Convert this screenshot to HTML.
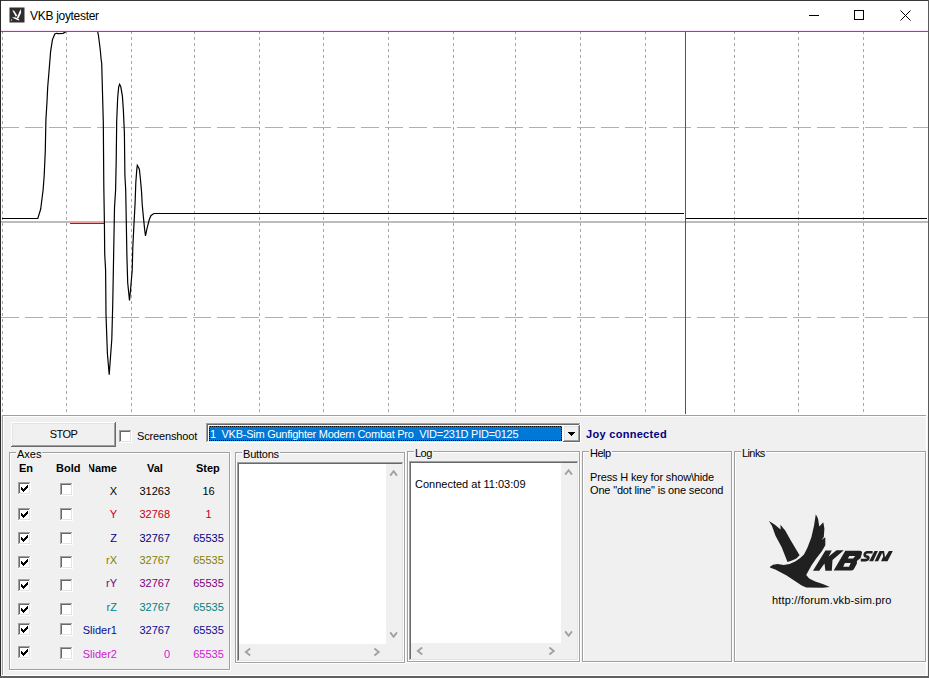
<!DOCTYPE html>
<html><head><meta charset="utf-8">
<style>
html,body{margin:0;padding:0;}
body{width:929px;height:678px;position:relative;overflow:hidden;background:#f0f0f0;font-family:"Liberation Sans",sans-serif;font-size:11px;color:#000;}
.t{position:absolute;white-space:nowrap;line-height:13px;height:13px;}
.r{text-align:right;}
.c{text-align:center;}
.b{font-weight:bold;}
.lbl{background:#f0f0f0;padding:0 1px;}
svg{position:absolute;left:0;top:0;}
</style></head><body>
<svg width="929" height="678" viewBox="0 0 929 678" shape-rendering="crispEdges">
<defs><clipPath id="cc"><rect x="1" y="31" width="927" height="384"/></clipPath></defs>
<rect x="0" y="0" width="929" height="31" fill="#ffffff"/>
<rect x="1" y="31" width="927" height="384" fill="#ffffff"/>
<g stroke="#a8a8a8" stroke-width="1" stroke-dasharray="3 3">
<line x1="2.5" y1="31" x2="2.5" y2="415" />
<line x1="66.5" y1="31" x2="66.5" y2="415" />
<line x1="131.5" y1="31" x2="131.5" y2="415" />
<line x1="194.5" y1="31" x2="194.5" y2="415" />
<line x1="259.5" y1="31" x2="259.5" y2="415" />
<line x1="323.5" y1="31" x2="323.5" y2="415" />
<line x1="388.5" y1="31" x2="388.5" y2="415" />
<line x1="453.5" y1="31" x2="453.5" y2="415" />
<line x1="515.5" y1="31" x2="515.5" y2="415" />
<line x1="580.5" y1="31" x2="580.5" y2="415" />
<line x1="645.5" y1="31" x2="645.5" y2="415" />
<line x1="734.5" y1="31" x2="734.5" y2="415" />
<line x1="798.5" y1="31" x2="798.5" y2="415" />
<line x1="863.5" y1="31" x2="863.5" y2="415" />
</g>
<g stroke="#b0b0b0" stroke-width="1" stroke-dasharray="18 6">
<line x1="1" y1="127.5" x2="928" y2="127.5"/>
<line x1="1" y1="317.5" x2="928" y2="317.5"/>
</g>
<rect x="1" y="221" width="927" height="2" fill="#bcbcbc"/>
<rect x="70" y="222" width="34" height="1" fill="#f4a0a0"/>
<rect x="70" y="223" width="34" height="1" fill="#a81818"/>
<path d="M2,218.5 L37.8,218.5 L40.7,209 L41.9,199.5 L43.1,190 L44.2,175.5 L45.3,150.7 L45.9,120 L47.1,100 L47.7,87 L48.9,72.8 L50.6,51.6 L52.4,39.8 L54.8,33.9 L56.5,33.3 L58.3,33.7 L63,33.3 L65.4,32.1 L66,30 L97.3,30 L98.4,35 L100.2,49.2 L101.2,60 L101.7,63.1 L102.2,81.7 L103.3,122 L103.8,185.9 L104.4,222 L104.7,253.7 L105.6,270 L106,314.6 L107.4,353.5 L109.2,374.7 L110,364 L111.8,339.3 L112.7,305.7 L113.4,268 L114.5,207.7 L115.6,190 L116.2,161.1 L116.7,121 L117.7,97.2 L118.7,86.8 L119.6,84.3 L120.8,86.8 L122.4,96.1 L123.4,110.6 L124.4,133.3 L124.9,175.6 L125.7,190 L126.3,221.9 L126.9,256 L127.7,282.7 L129.5,300.4 L130.4,291.5 L132.2,270.3 L132.8,247.8 L133.9,225.4 L135.1,203 L135.8,182.8 L136.8,169.4 L137.3,165.3 L138.4,167.3 L139.4,169.4 L140.4,178.7 L141.6,192.4 L142.2,204.2 L143.4,217.1 L144.6,228.9 L145.5,236 L146.9,228.9 L149.3,219.5 L151,215.4 L154,213.5 L684,213.5" fill="none" stroke="#000" stroke-width="1.2" clip-path="url(#cc)" shape-rendering="auto"/>
<rect x="686" y="218" width="241" height="1" fill="#000"/>
<rect x="685" y="31" width="1" height="383" fill="#237a23"/>
<rect x="1" y="30" width="927" height="1" fill="#fde2fd"/><rect x="1" y="31" width="927" height="1" fill="#9c40a2"/>
<rect x="0" y="0" width="929" height="1" fill="#3a3a3a"/>
<rect x="0" y="0" width="1" height="678" fill="#2a2a2a"/>
<rect x="928" y="0" width="1" height="678" fill="#5a5a5a"/>
<rect x="0" y="676" width="929" height="2" fill="#606060"/>
<rect x="2" y="415" width="925" height="1" fill="#a0a0a0"/>
<rect x="2" y="415" width="1" height="261" fill="#a0a0a0"/>
<rect x="3" y="416" width="924" height="1" fill="#ffffff"/>
<rect x="3" y="416" width="1" height="260" fill="#ffffff"/>
<rect x="926" y="415" width="1" height="261" fill="#ffffff"/>
<rect x="2" y="675" width="925" height="1" fill="#ffffff"/>
<rect x="11" y="422" width="105" height="25" fill="#696969"/><rect x="11" y="422" width="104" height="24" fill="#fff"/><rect x="12" y="423" width="103" height="23" fill="#a0a0a0"/><rect x="12" y="423" width="102" height="22" fill="#e3e3e3"/><rect x="13" y="424" width="101" height="21" fill="#f0f0f0"/><rect x="119" y="430" width="13" height="13" fill="#fff"/><rect x="119" y="430" width="12" height="1" fill="#a0a0a0"/><rect x="119" y="430" width="1" height="12" fill="#a0a0a0"/><rect x="120" y="431" width="10" height="1" fill="#696969"/><rect x="120" y="431" width="1" height="10" fill="#696969"/><rect x="120" y="441" width="11" height="1" fill="#e3e3e3"/><rect x="130" y="431" width="1" height="11" fill="#e3e3e3"/><rect x="206" y="423" width="375" height="20" fill="#fff"/><rect x="206" y="423" width="374" height="1" fill="#a0a0a0"/><rect x="206" y="423" width="1" height="19" fill="#a0a0a0"/><rect x="207" y="424" width="372" height="1" fill="#696969"/><rect x="207" y="424" width="1" height="17" fill="#696969"/><rect x="207" y="441" width="373" height="1" fill="#e3e3e3"/><rect x="579" y="424" width="1" height="18" fill="#e3e3e3"/><rect x="209" y="426" width="353" height="15" fill="#0078d7"/><rect x="209.5" y="426.5" width="352" height="14" fill="none" stroke="#000" stroke-width="1" stroke-dasharray="1 1"/><rect x="563" y="425" width="17" height="17" fill="#696969"/><rect x="563" y="425" width="16" height="16" fill="#fff"/><rect x="564" y="426" width="15" height="15" fill="#a0a0a0"/><rect x="564" y="426" width="14" height="14" fill="#e3e3e3"/><rect x="565" y="427" width="13" height="13" fill="#f0f0f0"/><path d="M568,432 L575,432 L571.5,435.8 Z" fill="#000"/><rect x="9" y="452" width="220" height="1" fill="#a0a0a0"/><rect x="9" y="452" width="1" height="217" fill="#a0a0a0"/><rect x="229" y="452" width="1" height="218" fill="#a0a0a0"/><rect x="9" y="669" width="221" height="1" fill="#a0a0a0"/><rect x="10" y="453" width="219" height="1" fill="#fff"/><rect x="10" y="453" width="1" height="216" fill="#fff"/><rect x="230" y="452" width="1" height="219" fill="#fff"/><rect x="9" y="670" width="222" height="1" fill="#fff"/><rect x="235" y="452" width="169" height="1" fill="#a0a0a0"/><rect x="235" y="452" width="1" height="210" fill="#a0a0a0"/><rect x="404" y="452" width="1" height="211" fill="#a0a0a0"/><rect x="235" y="662" width="170" height="1" fill="#a0a0a0"/><rect x="236" y="453" width="168" height="1" fill="#fff"/><rect x="236" y="453" width="1" height="209" fill="#fff"/><rect x="405" y="452" width="1" height="212" fill="#fff"/><rect x="235" y="663" width="171" height="1" fill="#fff"/><rect x="407" y="451" width="172" height="1" fill="#a0a0a0"/><rect x="407" y="451" width="1" height="210" fill="#a0a0a0"/><rect x="579" y="451" width="1" height="211" fill="#a0a0a0"/><rect x="407" y="661" width="173" height="1" fill="#a0a0a0"/><rect x="408" y="452" width="171" height="1" fill="#fff"/><rect x="408" y="452" width="1" height="209" fill="#fff"/><rect x="580" y="451" width="1" height="212" fill="#fff"/><rect x="407" y="662" width="174" height="1" fill="#fff"/><rect x="582" y="451" width="149" height="1" fill="#a0a0a0"/><rect x="582" y="451" width="1" height="210" fill="#a0a0a0"/><rect x="731" y="451" width="1" height="211" fill="#a0a0a0"/><rect x="582" y="661" width="150" height="1" fill="#a0a0a0"/><rect x="583" y="452" width="148" height="1" fill="#fff"/><rect x="583" y="452" width="1" height="209" fill="#fff"/><rect x="732" y="451" width="1" height="212" fill="#fff"/><rect x="582" y="662" width="151" height="1" fill="#fff"/><rect x="734" y="451" width="191" height="1" fill="#a0a0a0"/><rect x="734" y="451" width="1" height="210" fill="#a0a0a0"/><rect x="925" y="451" width="1" height="211" fill="#a0a0a0"/><rect x="734" y="661" width="192" height="1" fill="#a0a0a0"/><rect x="735" y="452" width="190" height="1" fill="#fff"/><rect x="735" y="452" width="1" height="209" fill="#fff"/><rect x="926" y="451" width="1" height="212" fill="#fff"/><rect x="734" y="662" width="193" height="1" fill="#fff"/><rect x="18" y="482" width="13" height="13" fill="#fff"/><rect x="18" y="482" width="12" height="1" fill="#a0a0a0"/><rect x="18" y="482" width="1" height="12" fill="#a0a0a0"/><rect x="19" y="483" width="10" height="1" fill="#696969"/><rect x="19" y="483" width="1" height="10" fill="#696969"/><rect x="19" y="493" width="11" height="1" fill="#e3e3e3"/><rect x="29" y="483" width="1" height="11" fill="#e3e3e3"/><rect x="27" y="485" width="1" height="1" fill="#000"/><rect x="26" y="486" width="1" height="1" fill="#000"/><rect x="27" y="486" width="1" height="1" fill="#000"/><rect x="21" y="487" width="1" height="1" fill="#000"/><rect x="25" y="487" width="1" height="1" fill="#000"/><rect x="26" y="487" width="1" height="1" fill="#000"/><rect x="27" y="487" width="1" height="1" fill="#000"/><rect x="21" y="488" width="1" height="1" fill="#000"/><rect x="22" y="488" width="1" height="1" fill="#000"/><rect x="24" y="488" width="1" height="1" fill="#000"/><rect x="25" y="488" width="1" height="1" fill="#000"/><rect x="26" y="488" width="1" height="1" fill="#000"/><rect x="21" y="489" width="1" height="1" fill="#000"/><rect x="22" y="489" width="1" height="1" fill="#000"/><rect x="23" y="489" width="1" height="1" fill="#000"/><rect x="24" y="489" width="1" height="1" fill="#000"/><rect x="25" y="489" width="1" height="1" fill="#000"/><rect x="22" y="490" width="1" height="1" fill="#000"/><rect x="23" y="490" width="1" height="1" fill="#000"/><rect x="24" y="490" width="1" height="1" fill="#000"/><rect x="23" y="491" width="1" height="1" fill="#000"/><rect x="18" y="508" width="13" height="13" fill="#fff"/><rect x="18" y="508" width="12" height="1" fill="#a0a0a0"/><rect x="18" y="508" width="1" height="12" fill="#a0a0a0"/><rect x="19" y="509" width="10" height="1" fill="#696969"/><rect x="19" y="509" width="1" height="10" fill="#696969"/><rect x="19" y="519" width="11" height="1" fill="#e3e3e3"/><rect x="29" y="509" width="1" height="11" fill="#e3e3e3"/><rect x="27" y="511" width="1" height="1" fill="#000"/><rect x="26" y="512" width="1" height="1" fill="#000"/><rect x="27" y="512" width="1" height="1" fill="#000"/><rect x="21" y="513" width="1" height="1" fill="#000"/><rect x="25" y="513" width="1" height="1" fill="#000"/><rect x="26" y="513" width="1" height="1" fill="#000"/><rect x="27" y="513" width="1" height="1" fill="#000"/><rect x="21" y="514" width="1" height="1" fill="#000"/><rect x="22" y="514" width="1" height="1" fill="#000"/><rect x="24" y="514" width="1" height="1" fill="#000"/><rect x="25" y="514" width="1" height="1" fill="#000"/><rect x="26" y="514" width="1" height="1" fill="#000"/><rect x="21" y="515" width="1" height="1" fill="#000"/><rect x="22" y="515" width="1" height="1" fill="#000"/><rect x="23" y="515" width="1" height="1" fill="#000"/><rect x="24" y="515" width="1" height="1" fill="#000"/><rect x="25" y="515" width="1" height="1" fill="#000"/><rect x="22" y="516" width="1" height="1" fill="#000"/><rect x="23" y="516" width="1" height="1" fill="#000"/><rect x="24" y="516" width="1" height="1" fill="#000"/><rect x="23" y="517" width="1" height="1" fill="#000"/><rect x="18" y="532" width="13" height="13" fill="#fff"/><rect x="18" y="532" width="12" height="1" fill="#a0a0a0"/><rect x="18" y="532" width="1" height="12" fill="#a0a0a0"/><rect x="19" y="533" width="10" height="1" fill="#696969"/><rect x="19" y="533" width="1" height="10" fill="#696969"/><rect x="19" y="543" width="11" height="1" fill="#e3e3e3"/><rect x="29" y="533" width="1" height="11" fill="#e3e3e3"/><rect x="27" y="535" width="1" height="1" fill="#000"/><rect x="26" y="536" width="1" height="1" fill="#000"/><rect x="27" y="536" width="1" height="1" fill="#000"/><rect x="21" y="537" width="1" height="1" fill="#000"/><rect x="25" y="537" width="1" height="1" fill="#000"/><rect x="26" y="537" width="1" height="1" fill="#000"/><rect x="27" y="537" width="1" height="1" fill="#000"/><rect x="21" y="538" width="1" height="1" fill="#000"/><rect x="22" y="538" width="1" height="1" fill="#000"/><rect x="24" y="538" width="1" height="1" fill="#000"/><rect x="25" y="538" width="1" height="1" fill="#000"/><rect x="26" y="538" width="1" height="1" fill="#000"/><rect x="21" y="539" width="1" height="1" fill="#000"/><rect x="22" y="539" width="1" height="1" fill="#000"/><rect x="23" y="539" width="1" height="1" fill="#000"/><rect x="24" y="539" width="1" height="1" fill="#000"/><rect x="25" y="539" width="1" height="1" fill="#000"/><rect x="22" y="540" width="1" height="1" fill="#000"/><rect x="23" y="540" width="1" height="1" fill="#000"/><rect x="24" y="540" width="1" height="1" fill="#000"/><rect x="23" y="541" width="1" height="1" fill="#000"/><rect x="18" y="556" width="13" height="13" fill="#fff"/><rect x="18" y="556" width="12" height="1" fill="#a0a0a0"/><rect x="18" y="556" width="1" height="12" fill="#a0a0a0"/><rect x="19" y="557" width="10" height="1" fill="#696969"/><rect x="19" y="557" width="1" height="10" fill="#696969"/><rect x="19" y="567" width="11" height="1" fill="#e3e3e3"/><rect x="29" y="557" width="1" height="11" fill="#e3e3e3"/><rect x="27" y="559" width="1" height="1" fill="#000"/><rect x="26" y="560" width="1" height="1" fill="#000"/><rect x="27" y="560" width="1" height="1" fill="#000"/><rect x="21" y="561" width="1" height="1" fill="#000"/><rect x="25" y="561" width="1" height="1" fill="#000"/><rect x="26" y="561" width="1" height="1" fill="#000"/><rect x="27" y="561" width="1" height="1" fill="#000"/><rect x="21" y="562" width="1" height="1" fill="#000"/><rect x="22" y="562" width="1" height="1" fill="#000"/><rect x="24" y="562" width="1" height="1" fill="#000"/><rect x="25" y="562" width="1" height="1" fill="#000"/><rect x="26" y="562" width="1" height="1" fill="#000"/><rect x="21" y="563" width="1" height="1" fill="#000"/><rect x="22" y="563" width="1" height="1" fill="#000"/><rect x="23" y="563" width="1" height="1" fill="#000"/><rect x="24" y="563" width="1" height="1" fill="#000"/><rect x="25" y="563" width="1" height="1" fill="#000"/><rect x="22" y="564" width="1" height="1" fill="#000"/><rect x="23" y="564" width="1" height="1" fill="#000"/><rect x="24" y="564" width="1" height="1" fill="#000"/><rect x="23" y="565" width="1" height="1" fill="#000"/><rect x="18" y="579" width="13" height="13" fill="#fff"/><rect x="18" y="579" width="12" height="1" fill="#a0a0a0"/><rect x="18" y="579" width="1" height="12" fill="#a0a0a0"/><rect x="19" y="580" width="10" height="1" fill="#696969"/><rect x="19" y="580" width="1" height="10" fill="#696969"/><rect x="19" y="590" width="11" height="1" fill="#e3e3e3"/><rect x="29" y="580" width="1" height="11" fill="#e3e3e3"/><rect x="27" y="582" width="1" height="1" fill="#000"/><rect x="26" y="583" width="1" height="1" fill="#000"/><rect x="27" y="583" width="1" height="1" fill="#000"/><rect x="21" y="584" width="1" height="1" fill="#000"/><rect x="25" y="584" width="1" height="1" fill="#000"/><rect x="26" y="584" width="1" height="1" fill="#000"/><rect x="27" y="584" width="1" height="1" fill="#000"/><rect x="21" y="585" width="1" height="1" fill="#000"/><rect x="22" y="585" width="1" height="1" fill="#000"/><rect x="24" y="585" width="1" height="1" fill="#000"/><rect x="25" y="585" width="1" height="1" fill="#000"/><rect x="26" y="585" width="1" height="1" fill="#000"/><rect x="21" y="586" width="1" height="1" fill="#000"/><rect x="22" y="586" width="1" height="1" fill="#000"/><rect x="23" y="586" width="1" height="1" fill="#000"/><rect x="24" y="586" width="1" height="1" fill="#000"/><rect x="25" y="586" width="1" height="1" fill="#000"/><rect x="22" y="587" width="1" height="1" fill="#000"/><rect x="23" y="587" width="1" height="1" fill="#000"/><rect x="24" y="587" width="1" height="1" fill="#000"/><rect x="23" y="588" width="1" height="1" fill="#000"/><rect x="18" y="603" width="13" height="13" fill="#fff"/><rect x="18" y="603" width="12" height="1" fill="#a0a0a0"/><rect x="18" y="603" width="1" height="12" fill="#a0a0a0"/><rect x="19" y="604" width="10" height="1" fill="#696969"/><rect x="19" y="604" width="1" height="10" fill="#696969"/><rect x="19" y="614" width="11" height="1" fill="#e3e3e3"/><rect x="29" y="604" width="1" height="11" fill="#e3e3e3"/><rect x="27" y="606" width="1" height="1" fill="#000"/><rect x="26" y="607" width="1" height="1" fill="#000"/><rect x="27" y="607" width="1" height="1" fill="#000"/><rect x="21" y="608" width="1" height="1" fill="#000"/><rect x="25" y="608" width="1" height="1" fill="#000"/><rect x="26" y="608" width="1" height="1" fill="#000"/><rect x="27" y="608" width="1" height="1" fill="#000"/><rect x="21" y="609" width="1" height="1" fill="#000"/><rect x="22" y="609" width="1" height="1" fill="#000"/><rect x="24" y="609" width="1" height="1" fill="#000"/><rect x="25" y="609" width="1" height="1" fill="#000"/><rect x="26" y="609" width="1" height="1" fill="#000"/><rect x="21" y="610" width="1" height="1" fill="#000"/><rect x="22" y="610" width="1" height="1" fill="#000"/><rect x="23" y="610" width="1" height="1" fill="#000"/><rect x="24" y="610" width="1" height="1" fill="#000"/><rect x="25" y="610" width="1" height="1" fill="#000"/><rect x="22" y="611" width="1" height="1" fill="#000"/><rect x="23" y="611" width="1" height="1" fill="#000"/><rect x="24" y="611" width="1" height="1" fill="#000"/><rect x="23" y="612" width="1" height="1" fill="#000"/><rect x="18" y="623" width="13" height="13" fill="#fff"/><rect x="18" y="623" width="12" height="1" fill="#a0a0a0"/><rect x="18" y="623" width="1" height="12" fill="#a0a0a0"/><rect x="19" y="624" width="10" height="1" fill="#696969"/><rect x="19" y="624" width="1" height="10" fill="#696969"/><rect x="19" y="634" width="11" height="1" fill="#e3e3e3"/><rect x="29" y="624" width="1" height="11" fill="#e3e3e3"/><rect x="27" y="626" width="1" height="1" fill="#000"/><rect x="26" y="627" width="1" height="1" fill="#000"/><rect x="27" y="627" width="1" height="1" fill="#000"/><rect x="21" y="628" width="1" height="1" fill="#000"/><rect x="25" y="628" width="1" height="1" fill="#000"/><rect x="26" y="628" width="1" height="1" fill="#000"/><rect x="27" y="628" width="1" height="1" fill="#000"/><rect x="21" y="629" width="1" height="1" fill="#000"/><rect x="22" y="629" width="1" height="1" fill="#000"/><rect x="24" y="629" width="1" height="1" fill="#000"/><rect x="25" y="629" width="1" height="1" fill="#000"/><rect x="26" y="629" width="1" height="1" fill="#000"/><rect x="21" y="630" width="1" height="1" fill="#000"/><rect x="22" y="630" width="1" height="1" fill="#000"/><rect x="23" y="630" width="1" height="1" fill="#000"/><rect x="24" y="630" width="1" height="1" fill="#000"/><rect x="25" y="630" width="1" height="1" fill="#000"/><rect x="22" y="631" width="1" height="1" fill="#000"/><rect x="23" y="631" width="1" height="1" fill="#000"/><rect x="24" y="631" width="1" height="1" fill="#000"/><rect x="23" y="632" width="1" height="1" fill="#000"/><rect x="18" y="646" width="13" height="13" fill="#fff"/><rect x="18" y="646" width="12" height="1" fill="#a0a0a0"/><rect x="18" y="646" width="1" height="12" fill="#a0a0a0"/><rect x="19" y="647" width="10" height="1" fill="#696969"/><rect x="19" y="647" width="1" height="10" fill="#696969"/><rect x="19" y="657" width="11" height="1" fill="#e3e3e3"/><rect x="29" y="647" width="1" height="11" fill="#e3e3e3"/><rect x="27" y="649" width="1" height="1" fill="#000"/><rect x="26" y="650" width="1" height="1" fill="#000"/><rect x="27" y="650" width="1" height="1" fill="#000"/><rect x="21" y="651" width="1" height="1" fill="#000"/><rect x="25" y="651" width="1" height="1" fill="#000"/><rect x="26" y="651" width="1" height="1" fill="#000"/><rect x="27" y="651" width="1" height="1" fill="#000"/><rect x="21" y="652" width="1" height="1" fill="#000"/><rect x="22" y="652" width="1" height="1" fill="#000"/><rect x="24" y="652" width="1" height="1" fill="#000"/><rect x="25" y="652" width="1" height="1" fill="#000"/><rect x="26" y="652" width="1" height="1" fill="#000"/><rect x="21" y="653" width="1" height="1" fill="#000"/><rect x="22" y="653" width="1" height="1" fill="#000"/><rect x="23" y="653" width="1" height="1" fill="#000"/><rect x="24" y="653" width="1" height="1" fill="#000"/><rect x="25" y="653" width="1" height="1" fill="#000"/><rect x="22" y="654" width="1" height="1" fill="#000"/><rect x="23" y="654" width="1" height="1" fill="#000"/><rect x="24" y="654" width="1" height="1" fill="#000"/><rect x="23" y="655" width="1" height="1" fill="#000"/><rect x="60" y="483" width="13" height="13" fill="#fff"/><rect x="60" y="483" width="12" height="1" fill="#a0a0a0"/><rect x="60" y="483" width="1" height="12" fill="#a0a0a0"/><rect x="61" y="484" width="10" height="1" fill="#696969"/><rect x="61" y="484" width="1" height="10" fill="#696969"/><rect x="61" y="494" width="11" height="1" fill="#e3e3e3"/><rect x="71" y="484" width="1" height="11" fill="#e3e3e3"/><rect x="60" y="508" width="13" height="13" fill="#fff"/><rect x="60" y="508" width="12" height="1" fill="#a0a0a0"/><rect x="60" y="508" width="1" height="12" fill="#a0a0a0"/><rect x="61" y="509" width="10" height="1" fill="#696969"/><rect x="61" y="509" width="1" height="10" fill="#696969"/><rect x="61" y="519" width="11" height="1" fill="#e3e3e3"/><rect x="71" y="509" width="1" height="11" fill="#e3e3e3"/><rect x="60" y="532" width="13" height="13" fill="#fff"/><rect x="60" y="532" width="12" height="1" fill="#a0a0a0"/><rect x="60" y="532" width="1" height="12" fill="#a0a0a0"/><rect x="61" y="533" width="10" height="1" fill="#696969"/><rect x="61" y="533" width="1" height="10" fill="#696969"/><rect x="61" y="543" width="11" height="1" fill="#e3e3e3"/><rect x="71" y="533" width="1" height="11" fill="#e3e3e3"/><rect x="60" y="556" width="13" height="13" fill="#fff"/><rect x="60" y="556" width="12" height="1" fill="#a0a0a0"/><rect x="60" y="556" width="1" height="12" fill="#a0a0a0"/><rect x="61" y="557" width="10" height="1" fill="#696969"/><rect x="61" y="557" width="1" height="10" fill="#696969"/><rect x="61" y="567" width="11" height="1" fill="#e3e3e3"/><rect x="71" y="557" width="1" height="11" fill="#e3e3e3"/><rect x="60" y="579" width="13" height="13" fill="#fff"/><rect x="60" y="579" width="12" height="1" fill="#a0a0a0"/><rect x="60" y="579" width="1" height="12" fill="#a0a0a0"/><rect x="61" y="580" width="10" height="1" fill="#696969"/><rect x="61" y="580" width="1" height="10" fill="#696969"/><rect x="61" y="590" width="11" height="1" fill="#e3e3e3"/><rect x="71" y="580" width="1" height="11" fill="#e3e3e3"/><rect x="60" y="603" width="13" height="13" fill="#fff"/><rect x="60" y="603" width="12" height="1" fill="#a0a0a0"/><rect x="60" y="603" width="1" height="12" fill="#a0a0a0"/><rect x="61" y="604" width="10" height="1" fill="#696969"/><rect x="61" y="604" width="1" height="10" fill="#696969"/><rect x="61" y="614" width="11" height="1" fill="#e3e3e3"/><rect x="71" y="604" width="1" height="11" fill="#e3e3e3"/><rect x="60" y="623" width="13" height="13" fill="#fff"/><rect x="60" y="623" width="12" height="1" fill="#a0a0a0"/><rect x="60" y="623" width="1" height="12" fill="#a0a0a0"/><rect x="61" y="624" width="10" height="1" fill="#696969"/><rect x="61" y="624" width="1" height="10" fill="#696969"/><rect x="61" y="634" width="11" height="1" fill="#e3e3e3"/><rect x="71" y="624" width="1" height="11" fill="#e3e3e3"/><rect x="60" y="647" width="13" height="13" fill="#fff"/><rect x="60" y="647" width="12" height="1" fill="#a0a0a0"/><rect x="60" y="647" width="1" height="12" fill="#a0a0a0"/><rect x="61" y="648" width="10" height="1" fill="#696969"/><rect x="61" y="648" width="1" height="10" fill="#696969"/><rect x="61" y="658" width="11" height="1" fill="#e3e3e3"/><rect x="71" y="648" width="1" height="11" fill="#e3e3e3"/><rect x="237" y="462" width="167" height="200" fill="#fff"/><rect x="237" y="462" width="166" height="1" fill="#a0a0a0"/><rect x="237" y="462" width="1" height="199" fill="#a0a0a0"/><rect x="238" y="463" width="164" height="1" fill="#696969"/><rect x="238" y="463" width="1" height="197" fill="#696969"/><rect x="238" y="660" width="165" height="1" fill="#e3e3e3"/><rect x="402" y="463" width="1" height="198" fill="#e3e3e3"/><rect x="386" y="464" width="16" height="196" fill="#f0f0f0"/><rect x="239" y="644" width="163" height="16" fill="#f0f0f0"/><rect x="402" y="463" width="1" height="198" fill="#e3e3e3"/><rect x="238" y="660" width="165" height="1" fill="#e3e3e3"/><path d="M390.20000000000005,475.6 L393.6,471.2 L397.0,475.6" fill="none" stroke="#a0a0a0" stroke-width="1.8" shape-rendering="auto"/><path d="M390.20000000000005,632.4 L393.6,636.8 L397.0,632.4" fill="none" stroke="#a0a0a0" stroke-width="1.8" shape-rendering="auto"/><path d="M250.2,648.5 L245.8,652 L250.2,655.5" fill="none" stroke="#a0a0a0" stroke-width="1.8" shape-rendering="auto"/><path d="M374.4,648.5 L378.8,652 L374.4,655.5" fill="none" stroke="#a0a0a0" stroke-width="1.8" shape-rendering="auto"/><rect x="409" y="461" width="170" height="200" fill="#fff"/><rect x="409" y="461" width="169" height="1" fill="#a0a0a0"/><rect x="409" y="461" width="1" height="199" fill="#a0a0a0"/><rect x="410" y="462" width="167" height="1" fill="#696969"/><rect x="410" y="462" width="1" height="197" fill="#696969"/><rect x="410" y="659" width="168" height="1" fill="#e3e3e3"/><rect x="577" y="462" width="1" height="198" fill="#e3e3e3"/><rect x="561" y="463" width="16" height="196" fill="#f0f0f0"/><rect x="411" y="643" width="166" height="16" fill="#f0f0f0"/><rect x="577" y="462" width="1" height="198" fill="#e3e3e3"/><rect x="410" y="659" width="168" height="1" fill="#e3e3e3"/><path d="M565.2,474.6 L568.6,470.2 L572.0,474.6" fill="none" stroke="#a0a0a0" stroke-width="1.8" shape-rendering="auto"/><path d="M565.2,631.4 L568.6,635.8 L572.0,631.4" fill="none" stroke="#a0a0a0" stroke-width="1.8" shape-rendering="auto"/><path d="M422.2,647.5 L417.8,651 L422.2,654.5" fill="none" stroke="#a0a0a0" stroke-width="1.8" shape-rendering="auto"/><path d="M549.4,647.5 L553.8,651 L549.4,654.5" fill="none" stroke="#a0a0a0" stroke-width="1.8" shape-rendering="auto"/>
</svg>

<svg style="left:0;top:0;" width="30" height="30"><rect x="9.5" y="7.5" width="15" height="15" fill="#2e2e2e"/><path d="M12.3,10.3 L14.2,10.8 L17.2,15.6 L15.8,16.8 Z M20.6,9 L21.2,12.5 L18.6,18.2 L16.6,18.3 Z M11.8,17.6 L15,17.3 L19.5,19.6 L18.5,20.6 Z M11.2,19 L11.8,19.2 L11.6,21 L11,21 Z" fill="#fff"/></svg>
<div class="t" style="left:30px;top:9px;font-size:12px;line-height:15px;height:15px;letter-spacing:-0.3px;">VKB joytester</div>
<div style="position:absolute;left:809px;top:15px;width:10px;height:1px;background:#000;"></div>
<div style="position:absolute;left:854px;top:10px;width:8px;height:8px;border:1px solid #000;"></div>
<svg style="left:900px;top:10px;" width="11" height="11"><path d="M0.5,0.5 L10.5,10.5 M10.5,0.5 L0.5,10.5" stroke="#000" stroke-width="1"/></svg>

<div class="t c" style="left:11px;top:428px;width:105px;letter-spacing:-0.6px;">STOP</div>
<div class="t" style="left:137px;top:430px;letter-spacing:-0.15px;">Screenshoot</div>
<div class="t" style="left:210px;top:428px;color:#fff;letter-spacing:-0.25px;">1&nbsp; VKB-Sim Gunfighter Modern Combat Pro&nbsp; VID=231D PID=0125</div>
<div class="t b" style="left:586px;top:428px;color:#000080;letter-spacing:0.3px;">Joy connected</div>

<div class="t lbl" style="left:16px;top:448px;">Axes</div>
<div class="t lbl" style="left:242px;top:448px;letter-spacing:-0.2px;">Buttons</div>
<div class="t lbl" style="left:414px;top:447px;letter-spacing:-0.5px;">Log</div>
<div class="t lbl" style="left:589px;top:447px;letter-spacing:-0.5px;">Help</div>
<div class="t lbl" style="left:741px;top:447px;letter-spacing:-0.6px;">Links</div>

<div class="t b" style="left:19px;top:462px;">En</div>
<div class="t b" style="left:56px;top:462px;">Bold</div>
<div style="position:absolute;left:88.6px;top:462px;width:32px;height:13px;overflow:hidden;"><div class="t b" style="left:-1.6px;top:0;">Name</div></div>
<div class="t b" style="left:147px;top:462px;">Val</div>
<div class="t b" style="left:196px;top:462px;">Step</div>

<div class="t r" style="left:60px;top:485px;width:57px;color:#000;">X</div><div class="t r" style="left:120px;top:485px;width:50px;color:#000;">31263</div><div class="t c" style="left:188px;top:485px;width:41px;color:#000;">16</div><div class="t r" style="left:60px;top:508px;width:57px;color:#c00018;">Y</div><div class="t r" style="left:120px;top:508px;width:50px;color:#c00018;">32768</div><div class="t c" style="left:188px;top:508px;width:41px;color:#c00018;">1</div><div class="t r" style="left:60px;top:532px;width:57px;color:#000080;">Z</div><div class="t r" style="left:120px;top:532px;width:50px;color:#000080;">32767</div><div class="t c" style="left:188px;top:532px;width:41px;color:#000080;">65535</div><div class="t r" style="left:60px;top:554px;width:57px;color:#808000;">rX</div><div class="t r" style="left:120px;top:554px;width:50px;color:#808000;">32767</div><div class="t c" style="left:188px;top:554px;width:41px;color:#808000;">65535</div><div class="t r" style="left:60px;top:577px;width:57px;color:#800080;">rY</div><div class="t r" style="left:120px;top:577px;width:50px;color:#800080;">32767</div><div class="t c" style="left:188px;top:577px;width:41px;color:#800080;">65535</div><div class="t r" style="left:60px;top:601px;width:57px;color:#008080;">rZ</div><div class="t r" style="left:120px;top:601px;width:50px;color:#008080;">32767</div><div class="t c" style="left:188px;top:601px;width:41px;color:#008080;">65535</div><div class="t r" style="left:60px;top:624px;width:57px;color:#0a0a90;">Slider1</div><div class="t r" style="left:120px;top:624px;width:50px;color:#0a0a90;">32767</div><div class="t c" style="left:188px;top:624px;width:41px;color:#0a0a90;">65535</div><div class="t r" style="left:60px;top:648px;width:57px;color:#d020d0;">Slider2</div><div class="t r" style="left:120px;top:648px;width:50px;color:#d020d0;">0</div><div class="t c" style="left:188px;top:648px;width:41px;color:#d020d0;">65535</div>

<div class="t" style="left:415px;top:478px;">Connected at 11:03:09</div>
<div class="t" style="left:590px;top:471px;letter-spacing:-0.15px;">Press H key for show\hide</div>
<div class="t" style="left:590px;top:484px;letter-spacing:-0.17px;">One "dot line" is one second</div>
<div class="t" style="left:772px;top:594px;letter-spacing:0.17px;">http://forum.vkb-sim.pro</div>
<svg style="left:0;top:0;" width="929" height="678" viewBox="0 0 929 678">
<g fill="#202020">
<path d="M768.9,521.1 L774.6,524.4 L780.6,529.6 L780.4,524.8 L785.2,530.4 L790.5,540 L799.6,555.2 L796.4,558.4 L792,560.6 L787.5,561.9 L781.7,547.2 L775.5,535.7 L772,526 Z"/>
<path d="M769.7,567 L773,564.7 L777.6,563.9 L783.6,565.1 L789.6,563.9 L795.6,561.3 L800.2,557.9 L804,554.5 L807.4,547.8 L811.4,537.2 L814,525.7 L815.8,514.2 L818,518.6 L819.3,526.6 L823.3,522.2 L824.4,528.4 L823.8,537 L821.6,539.9 L825.3,537.2 L825.3,545.2 L821.7,551.4 L816.2,558.4 L811.4,565.5 L806.2,574.9 L809.2,578.6 L815.2,581.6 L822.8,583.9 L829.8,587 L822.8,587.8 L806.2,587.4 L801.7,585.4 L786.6,575.6 L775.3,569.6 L770.4,567.8 Z"/>
<path d="M825.4,550.5 L831.8,550.5 L828.6,556.6 L836.6,550.3 L843.8,550.3 L832.5,560 L831.8,570.8 L825.4,570.8 L824.5,563.4 L819.2,570.8 L813,570.8 Z"/>
<path fill-rule="evenodd" d="M845.3,550.8 L859.8,550.8 Q862.5,551.2 862,553 L860.6,558 L856.9,560.9 L856.9,563.4 L854.8,567.5 Q853.5,570.6 851.5,570.6 L833.7,570.6 Z M849.4,555.9 L855.2,555.9 L853.1,558.6 L847.8,558.6 Z M844.9,563.1 L850.7,563.1 L849,566.7 L843.2,566.7 Z"/>
</g>
<path d="M874.5,551.1 L877.9,551.1 L873.1,561.3 L869.2,561.3 Z M874.6,561.3 L879.5,551.1 L883,551.1 L878.2,561.3 Z M881.9,551.1 L884.1,551.1 L885,557.2 L888.9,551.1 L892.8,551.1 L887.5,561.3 L881,561.3 L883.2,556.6 Z" fill="#202020"/>
<path d="M872.6,552.3 L867.5,552.3 Q865,552.4 864.7,554.6 Q864.6,556.3 866.5,556.5 Q868.9,556.7 868.3,558.6 Q867.7,560.1 865.8,560.1 L860.8,560.1" fill="none" stroke="#202020" stroke-width="2.6"/>
</svg>

</body></html>
